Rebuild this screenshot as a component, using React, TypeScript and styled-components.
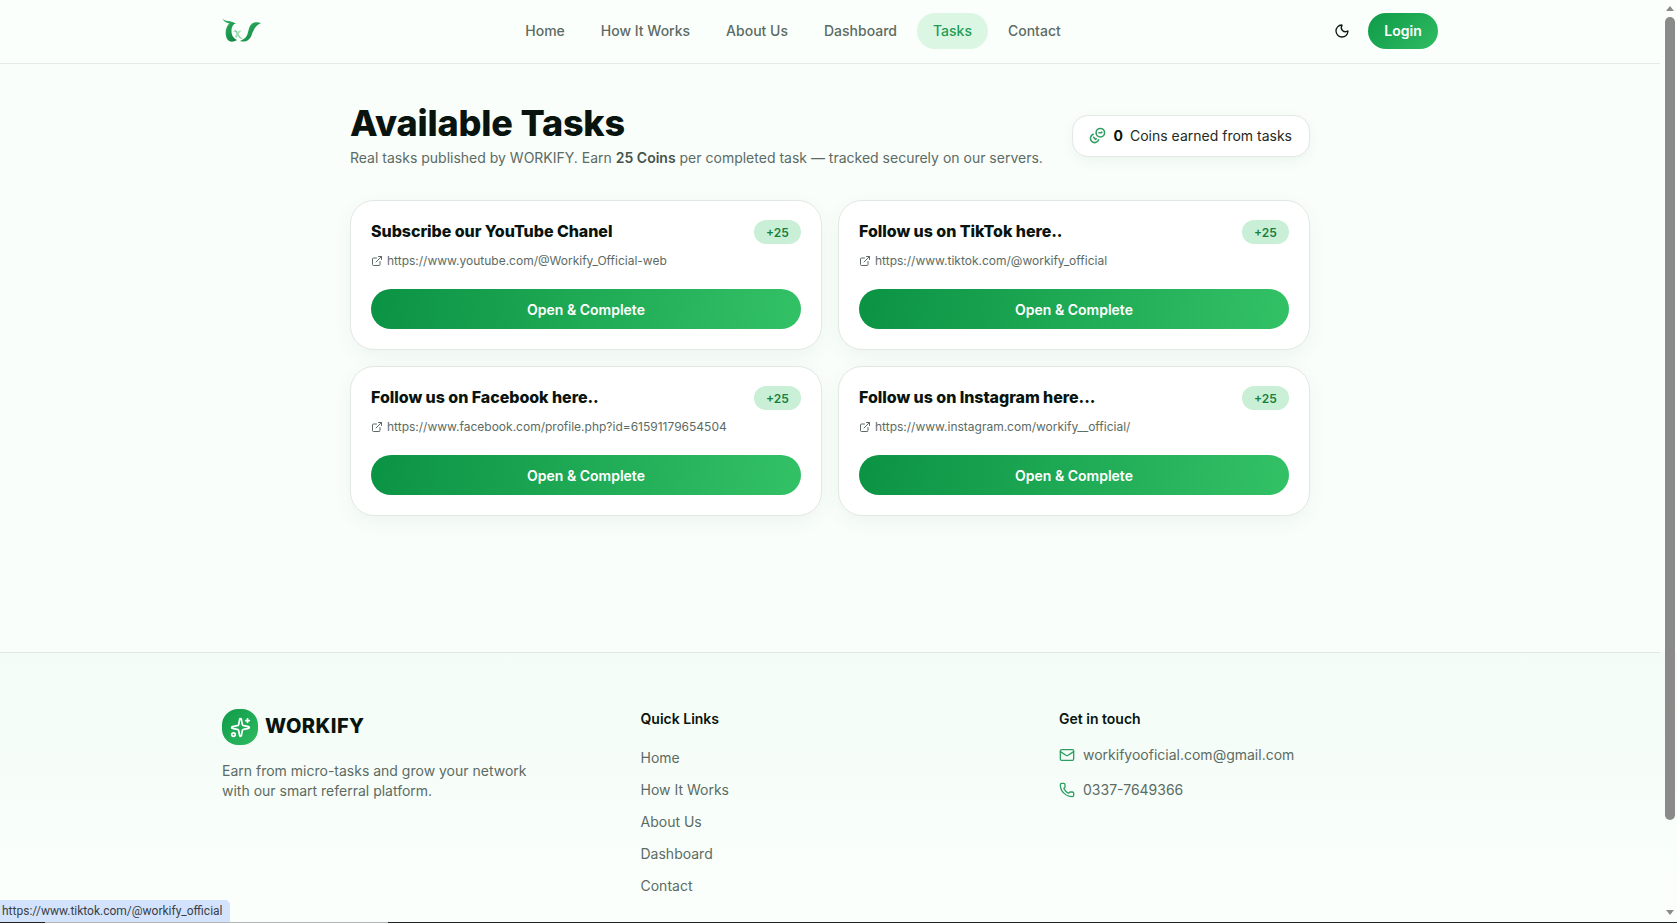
import styled, { createGlobalStyle } from "styled-components";
import { Coins, ExternalLink, Mail, Moon, Phone, Sparkles } from "lucide-react";

const links = ["Home", "How It Works", "About Us", "Dashboard", "Tasks", "Contact"];
const footerLinks = ["Home", "How It Works", "About Us", "Dashboard", "Contact"];

const tasks = [
    { title: "Subscribe our YouTube Chanel", url: "https://www.youtube.com/@Workify_Official-web" },
    { title: "Follow us on TikTok here..", url: "https://www.tiktok.com/@workify_official" },
    { title: "Follow us on Facebook here..", url: "https://www.facebook.com/profile.php?id=61591179654504" },
    { title: "Follow us on Instagram here...", url: "https://www.instagram.com/workify__official/" },
];

function Logo() {
    return (
        <svg width="40" height="26" viewBox="0 0 40 26" fill="none">
            <defs>
                <linearGradient id="logoGreen" x1="0" y1="0" x2="1" y2="1">
                    <stop offset="0" stopColor="#35b866" />
                    <stop offset="1" stopColor="#0b7f3e" />
                </linearGradient>
            </defs>
            <path d="M0.5 0.5C3 4 8 2 14 5.5C11 6 9.5 9 9.5 13C9.5 17 11 20 15 22C10 25 5 24 4 18C3 13 4.5 8 7.5 5.5C5 5 2 4 0.5 0.5Z" fill="url(#logoGreen)" />
            <path d="M11 14C13 11 15 12 16 15C17 18 19 20 21 21C18 21 16 19 15 16C14 14 13 13 11 14Z" fill="#7fcf9c" />
            <path d="M13 19C14 15 17 11 20 13C18 13 16 16 15 20Z" fill="#a5dfba" />
            <path d="M18 23C24 25 28 22 30 16C32 11 34 7 39 5C35 3.5 30 4 28 8C26 12 26 18 23 20C22 21 20 22 18 23Z" fill="url(#logoGreen)" />
        </svg>
    );
}

export default function App() {
    return (
        <Screen>
            <GlobalStyle />
            <Page>
                <TopBar>
                    <Logo />
                    <Nav>
                        {links.map((link) => (
                            <NavLink key={link} $active={link === "Tasks"}>{link}</NavLink>
                        ))}
                    </Nav>
                    <TopActions>
                        <Moon size={16} color="#0b1a12" strokeWidth={2} />
                        <LoginButton>Login</LoginButton>
                    </TopActions>
                </TopBar>

                <Main>
                    <Heading>
                        <div>
                            <Title>Available Tasks</Title>
                            <Subtitle>
                                Real tasks published by WORKIFY. Earn <strong>25 Coins</strong> per completed task — tracked securely on our servers.
                            </Subtitle>
                        </div>
                        <CoinsPill>
                            <CoinIcon size={17} strokeWidth={2.2} />
                            <CoinCount>0</CoinCount>
                            <span>Coins earned from tasks</span>
                        </CoinsPill>
                    </Heading>

                    <TaskGrid>
                        {tasks.map((task) => (
                            <TaskCard key={task.title}>
                                <TaskHead>
                                    <TaskTitle>{task.title}</TaskTitle>
                                    <Reward>+25</Reward>
                                </TaskHead>
                                <TaskUrl>
                                    <ExternalLink size={12} />
                                    {task.url}
                                </TaskUrl>
                                <OpenButton>Open &amp; Complete</OpenButton>
                            </TaskCard>
                        ))}
                    </TaskGrid>
                </Main>

                <Footer>
                    <BrandColumn>
                        <Brand>
                            <BrandMark><Sparkles size={21} color="#fff" /></BrandMark>
                            <BrandName>WORKIFY</BrandName>
                        </Brand>
                        <BrandText>Earn from micro-tasks and grow your network with our smart referral platform.</BrandText>
                    </BrandColumn>
                    <div>
                        <FooterHeading>Quick Links</FooterHeading>
                        <FooterLinks>
                            {footerLinks.map((link) => (
                                <FooterLink key={link}>{link}</FooterLink>
                            ))}
                        </FooterLinks>
                    </div>
                    <div>
                        <FooterHeading>Get in touch</FooterHeading>
                        <ContactList>
                            <ContactRow><Mail size={16} color="#2f9e62" />workifyooficial.com@gmail.com</ContactRow>
                            <ContactRow><Phone size={16} color="#2f9e62" />0337-7649366</ContactRow>
                        </ContactList>
                    </div>
                </Footer>
            </Page>

            <ScrollTrack>
                <ScrollArrow $up />
                <ScrollThumb />
                <ScrollArrow />
            </ScrollTrack>

            <StatusBubble>https://www.tiktok.com/@workify_official</StatusBubble>
            <BottomEdge />
        </Screen>
    );
}

const GlobalStyle = createGlobalStyle`
    html, body {
        margin: 0;
        height: 100%;
        overflow: hidden;
    }
    body {
        font-family: Inter, "Liberation Sans", sans-serif;
        color: #0b1a12;
    }
    * {
        box-sizing: border-box;
    }
`;

const Screen = styled.div`
    position: relative;
    display: flex;
    height: 100vh;
    overflow: hidden;
    background: #fbfffc;
`;
const Page = styled.div`
    flex: 1;
    min-width: 0;
    background: #f9fefb;
`;
const TopBar = styled.header`
    height: 64px;
    padding: 0 222px 2px 222px;
    display: flex;
    align-items: center;
    justify-content: space-between;
    border-bottom: 1px solid #e4ebe6;
    background: #fbfffc;
`;
const Nav = styled.nav`
    display: flex;
    gap: 4px;
    margin-right: 10px;
`;
const NavLink = styled.a<{ $active?: boolean }>`
    padding: 0 16px;
    height: 36px;
    display: flex;
    align-items: center;
    border-radius: 999px;
    font-size: 14px;
    font-weight: 500;
    color: ${(p) => (p.$active ? "#1f9d55" : "#5c6b63")};
    background: ${(p) => (p.$active ? "#dcf6e4" : "transparent")};
`;
const TopActions = styled.div`
    display: flex;
    align-items: center;
    gap: 18px;
`;
const LoginButton = styled.button`
    width: 70px;
    height: 36px;
    border: 0;
    border-radius: 999px;
    background: linear-gradient(135deg, #0f9a48, #2fbc62);
    color: #fff;
    font: 600 14px Inter, sans-serif;
`;
const Main = styled.main`
    width: 960px;
    margin: 0 auto;
    height: 588px;
    padding-top: 39px;
`;
const Heading = styled.div`
    display: flex;
    align-items: center;
    justify-content: space-between;
    margin-bottom: 32px;
`;
const Title = styled.h1`
    margin: 0;
    font-size: 36px;
    line-height: 40px;
    font-weight: 800;
    letter-spacing: -0.2px;
    color: #08140d;
`;
const Subtitle = styled.p`
    margin: 5px 0 0;
    font-size: 14px;
    line-height: 20px;
    color: #5c6b63;
    strong {
        font-weight: 600;
        color: #46544c;
    }
`;
const CoinsPill = styled.div`
    display: flex;
    align-items: center;
    gap: 8px;
    height: 42px;
    padding: 0 17px 1px 16px;
    border: 1px solid #e2e8e4;
    border-radius: 16px;
    background: #fff;
    font-size: 14px;
    color: #1d2a23;
    box-shadow: 0 4px 14px rgba(20, 80, 45, 0.05);
`;
const CoinIcon = styled(Coins)`
    color: #2f9e62;
    transform: rotate(90deg);
`;
const CoinCount = styled.span`
    margin: 0 -1px 0 0;
    font-weight: 700;
    color: #08140d;
`;
const TaskGrid = styled.div`
    display: grid;
    grid-template-columns: repeat(2, 1fr);
    gap: 16px;
`;
const TaskCard = styled.article`
    height: 150px;
    padding: 19px 20px 0;
    border: 1px solid #e2e8e4;
    border-radius: 24px;
    background: #fff;
    box-shadow: 0 6px 20px rgba(20, 80, 45, 0.05);
`;
const TaskHead = styled.div`
    display: flex;
    justify-content: space-between;
    align-items: flex-start;
`;
const TaskTitle = styled.h3`
    margin: 0;
    font-size: 16px;
    line-height: 22px;
    font-weight: 800;
    letter-spacing: -0.05px;
    color: #08140d;
`;
const Reward = styled.span`
    width: 47px;
    height: 24px;
    display: flex;
    align-items: center;
    justify-content: center;
    border-radius: 999px;
    background: #c9efd6;
    color: #16803d;
    font-size: 12px;
    font-weight: 600;
`;
const TaskUrl = styled.div`
    display: flex;
    align-items: center;
    gap: 4px;
    margin-top: 9px;
    font-size: 12px;
    line-height: 16px;
    color: #5c6b63;
`;
const OpenButton = styled.button`
    display: block;
    width: 100%;
    height: 40px;
    margin-top: 20px;
    border: 0;
    border-radius: 999px;
    background: linear-gradient(100deg, #0b9344, #33c166);
    color: #fff;
    font: 600 14px Inter, sans-serif;
`;
const Footer = styled.footer`
    display: grid;
    grid-template-columns: repeat(3, 378px);
    gap: 40.5px;
    height: 400px;
    padding: 56px 0 0 222px;
    border-top: 1px solid #dfe8e2;
    background: linear-gradient(180deg, #f3fcf6, #fbfffc 70%);
`;
const BrandColumn = styled.div`
    display: flex;
    flex-direction: column;
`;
const Brand = styled.div`
    display: flex;
    align-items: center;
    gap: 7px;
`;
const BrandMark = styled.div`
    width: 36px;
    height: 36px;
    border-radius: 16px;
    display: flex;
    align-items: center;
    justify-content: center;
    background: linear-gradient(135deg, #0f9a48, #2fbc62);
`;
const BrandName = styled.span`
    margin-bottom: 2px;
    font-size: 20px;
    font-weight: 800;
    letter-spacing: 0.45px;
    color: #08140d;
`;
const BrandText = styled.p`
    margin: 16px 0 0;
    max-width: 320px;
    font-size: 14px;
    line-height: 20px;
    color: #5c6b63;
`;
const FooterHeading = styled.h4`
    margin: 0 0 16px;
    font-size: 14px;
    line-height: 20px;
    font-weight: 600;
    color: #08140d;
`;
const FooterLinks = styled.div`
    display: flex;
    flex-direction: column;
    gap: 12px;
    padding-top: 3px;
`;
const FooterLink = styled.a`
    font-size: 14px;
    line-height: 20px;
    color: #5c6b63;
`;
const ContactList = styled.div`
    display: flex;
    flex-direction: column;
    gap: 15px;
`;
const ContactRow = styled.div`
    display: flex;
    align-items: center;
    gap: 8px;
    font-size: 14px;
    line-height: 20px;
    color: #5c6b63;
`;
const ScrollTrack = styled.div`
    width: 17px;
    flex: none;
    display: flex;
    flex-direction: column;
    align-items: flex-end;
    padding: 0 2px 0 0;
    background: linear-gradient(180deg, #fbfffc 652px, #f3fcf6 652px, #fbfffc 932px);
`;
const ScrollThumb = styled.div`
    width: 10px;
    height: 803px;
    border-radius: 5px;
    background: #8a8a8a;
`;
const ScrollArrow = styled.div<{ $up?: boolean }>`
    width: 10px;
    height: 17px;
    margin: ${(p) => (p.$up ? "0" : "84px 0 0")};
    display: flex;
    &::before {
        content: "";
        margin: auto;
        border-left: 4px solid transparent;
        border-right: 4px solid transparent;
        ${(p) => (p.$up ? "border-bottom: 5px solid #8a8a8a;" : "border-top: 5px solid #8a8a8a;")}
    }
`;
const StatusBubble = styled.div`
    position: absolute;
    left: 0;
    bottom: 1px;
    height: 22px;
    padding: 0 7px 0 2px;
    display: flex;
    align-items: center;
    border-top-right-radius: 5px;
    background: #d3e3fd;
    color: #3a3f45;
    font: 12px Roboto, sans-serif;
`;
const BottomEdge = styled.div`
    position: absolute;
    left: 0;
    right: 0;
    bottom: 0;
    height: 1px;
    background: linear-gradient(90deg, #222 45px, #b5b5b5 45px, #b5b5b5 388px, #222 388px);
`;
